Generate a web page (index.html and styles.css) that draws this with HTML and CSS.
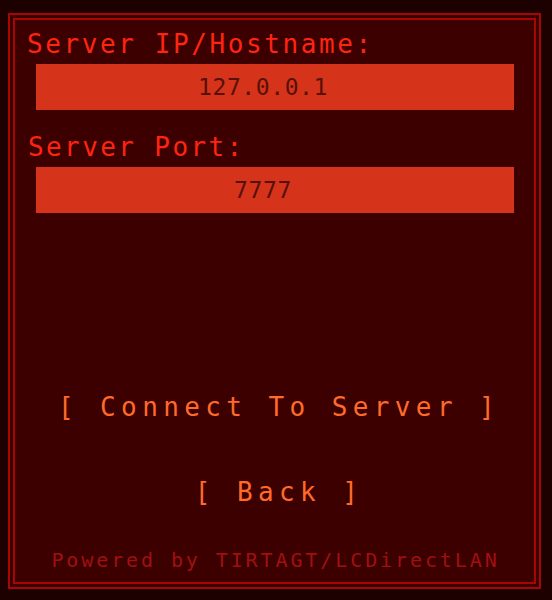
FILE: index.html
```html
<!DOCTYPE html>
<html lang="en">
<head>
<meta charset="utf-8">
<title>Direct Connect</title>
<link rel="stylesheet" href="styles.css">
</head>
<body>
<div class="frame">
  <div class="panel">
    <label class="label" for="ip">Server IP/Hostname:</label>
    <input class="field" id="ip" type="text" value="127.0.0.1">
    <label class="label label-port" for="port">Server Port:</label>
    <input class="field" id="port" type="text" value="7777">
    <div class="actions">
      <button class="btn btn-connect">[ Connect To Server ]</button>
      <button class="btn btn-back">[ Back ]</button>
    </div>
    <p class="footer">Powered by TIRTAGT/LCDirectLAN</p>
  </div>
</div>
</body>
</html>
```
FILE: styles.css
```css
html, body {
  margin: 0;
  padding: 0;
}
body {
  background: #1d0000;
  width: 552px;
  height: 600px;
  overflow: hidden;
  font-family: "DejaVu Sans Mono", "Liberation Mono", monospace;
}
.frame {
  box-sizing: border-box;
  margin: 13px 0 0 8px;
  width: 533px;
  height: 576px;
  border: 2px solid #a80505;
  padding: 3px;
  background: #360000;
}
.panel {
  box-sizing: border-box;
  height: 100%;
  border: 2px solid #a80505;
  background: #3c0000;
  padding: 9px 20px 0 10px;
  display: flex;
  flex-direction: column;
}
.label {
  display: block;
  color: #ff2410;
  font-size: 26px;
  line-height: 30px;
  letter-spacing: 2.6px;
  margin-bottom: 5px;
  padding-left: 2px;
}
.label-port {
  margin-top: 22px;
  letter-spacing: 2.4px;
  padding-left: 3px;
}
.field {
  box-sizing: border-box;
  display: block;
  margin-left: 11px;
  width: 478px;
  height: 46px;
  border: none;
  outline: none;
  background: #d6341a;
  color: #58100a;
  font-family: "DejaVu Sans Mono", "Liberation Mono", monospace;
  font-size: 23px;
  letter-spacing: 0.6px;
  text-align: center;
  padding: 0 24px 0 0;
}
.actions {
  margin-top: 179px;
  display: flex;
  flex-direction: column;
  align-items: center;
  gap: 55px;
  padding-left: 13px;
}
.btn {
  background: none;
  border: none;
  padding: 0 0 0 6px;
  margin: 0;
  color: #ff6a28;
  font-family: "DejaVu Sans Mono", "Liberation Mono", monospace;
  font-size: 26px;
  line-height: 30px;
  letter-spacing: 5.4px;
  cursor: pointer;
}
.footer {
  margin: 41px 0 0 0;
  padding-left: 12px;
  text-align: center;
  color: #a01010;
  font-size: 20px;
  line-height: 24px;
  letter-spacing: 2.9px;
}
```
